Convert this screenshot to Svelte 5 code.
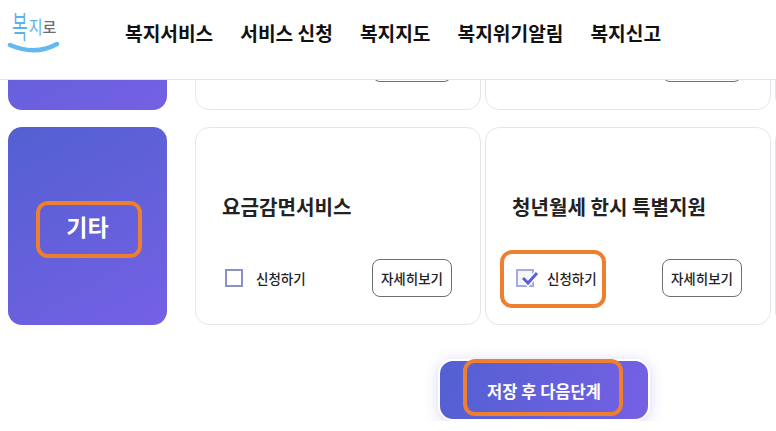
<script>
  const nav = ['복지서비스', '서비스 신청', '복지지도', '복지위기알림', '복지신고']

  const rows = [
    {
      label: '',
      cards: [
        { title: '', checked: false, marked: false },
        { title: '', checked: false, marked: false }
      ]
    },
    {
      label: '기타',
      cards: [
        { title: '요금감면서비스', checked: false, marked: false },
        { title: '청년월세 한시 특별지원', checked: true, marked: true }
      ]
    }
  ]
</script>

<div class="page">
  <header class="top">
    <a class="logo" href="#top">
      <span class="logo-text">
        <span class="logo-bok">복</span><span class="logo-ji">지</span><span class="logo-ro">로</span>
      </span>
      <svg class="smile" width="56" height="16" viewBox="0 0 56 16" aria-hidden="true">
        <path d="M3 4 Q28 15 50 3" fill="none" stroke="#63b9ef" stroke-width="4.5" stroke-linecap="round" />
      </svg>
    </a>
    <nav class="menu">
      {#each nav as item}
        <a href="#top">{item}</a>
      {/each}
    </nav>
  </header>

  <main class="scroller">
    <div class="list">
      {#each rows as row}
        <section class="row">
          <div class="category">
            {#if row.label}
              <span class="category-label">{row.label}</span>
              <span class="mark mark-category"></span>
            {/if}
          </div>
          {#each row.cards as card}
            <article class="card">
              <h3>{card.title}</h3>
              <div class="actions">
                <label class="check">
                  <span class="box" class:checked={card.checked}>
                    {#if card.checked}
                      <svg width="24" height="18" viewBox="0 0 24 18" aria-hidden="true">
                        <path d="M7 9 L12 14 L21 4" fill="none" stroke="#fff" stroke-width="6" />
                        <path d="M7 9 L12 14 L21 4" fill="none" stroke="#5b5fd8" stroke-width="3" />
                      </svg>
                    {/if}
                  </span>
                  신청하기
                  {#if card.marked}<span class="mark mark-check"></span>{/if}
                </label>
                <button class="more" type="button">자세히보기</button>
              </div>
            </article>
          {/each}
          <div class="card-edge"></div>
        </section>
      {/each}
    </div>
    <div class="footer">
      <button class="save" type="button">
        저장 후 다음단계
        <span class="mark mark-save"></span>
      </button>
    </div>
  </main>
</div>

<style>
  :global(body) {
    margin: 0;
    background: #fff;
  }
  .page {
    width: 776px;
    height: 431px;
    overflow: hidden;
    font-family: "Noto Sans CJK KR", "Noto Sans", sans-serif;
    color: #1f1f1f;
  }
  .top {
    position: relative;
    z-index: 2;
    display: flex;
    align-items: center;
    height: 79px;
    background: #fff;
    border-bottom: 1px solid #e4e4e6;
  }
  .logo {
    position: relative;
    display: block;
    width: 125px;
    height: 79px;
    flex-shrink: 0;
    text-decoration: none;
  }
  .logo-text {
    position: absolute;
    left: 12px;
    top: 12px;
    display: flex;
    align-items: flex-end;
    height: 28px;
    font-weight: 400;
    color: #5ab2ec;
    white-space: nowrap;
  }
  .logo-bok {
    font-size: 17px;
    line-height: 16px;
    transform-origin: 50% 100%;
    transform: scaleY(1.8);
  }
  .logo-ji {
    font-size: 15px;
    line-height: 16px;
    margin-left: 1px;
    margin-bottom: 5px;
    transform: scaleY(1.2);
  }
  .logo-ro {
    font-size: 15px;
    line-height: 16px;
    margin-bottom: 5px;
    font-weight: 500;
    color: #6d6d75;
  }
  .smile {
    position: absolute;
    left: 7px;
    top: 41px;
  }
  .menu {
    display: flex;
    gap: 27px;
    margin-top: -13px;
  }
  .menu a {
    font-size: 19.2px;
    line-height: 28px;
    font-weight: 700;
    color: #111;
    text-decoration: none;
    white-space: nowrap;
  }
  .scroller {
    height: 509px;
    margin-top: -168px;
    overflow: hidden;
  }
  .list {
    display: flex;
    flex-direction: column;
    gap: 17px;
  }
  .row {
    display: flex;
    height: 198px;
    padding-left: 8px;
  }
  .category {
    position: relative;
    display: flex;
    align-items: center;
    justify-content: center;
    flex: 0 0 159px;
    margin-right: 28px;
    border-radius: 14px;
    background: linear-gradient(150deg, #5360d2, #7560e4);
    color: #fff;
  }
  .category-label {
    font-size: 23px;
    font-weight: 700;
  }
  .card {
    flex: 0 0 286px;
    margin-right: 4px;
    box-sizing: border-box;
    padding: 0 28px 0 27px;
    display: flex;
    flex-direction: column;
    border: 1px solid #e6e6e8;
    border-radius: 14px;
    background: #fff;
  }
  .card-edge {
    flex: 0 0 20px;
    box-sizing: border-box;
    border: 1px solid #e6e6e8;
    border-right: 0;
    border-radius: 14px 0 0 14px;
  }
  .card h3 {
    margin: 60px 0 0 -1px;
    height: 38px;
    font-size: 20.1px;
    line-height: 38px;
    font-weight: 700;
    color: #222;
    white-space: nowrap;
  }
  .actions {
    display: flex;
    align-items: center;
    justify-content: space-between;
    margin-top: 33px;
  }
  .check {
    position: relative;
    display: flex;
    align-items: center;
    gap: 13px;
    margin-left: 2px;
    margin-top: -1px;
    font-size: 13.5px;
    font-weight: 500;
    color: #222;
  }
  .box {
    position: relative;
    width: 18px;
    height: 18px;
    box-sizing: border-box;
    border: 2px solid #8a91c6;
  }
  .box.checked {
    margin-left: 1px;
    border-color: #a6abdc;
    background: #f6f6fd;
  }
  .box svg {
    position: absolute;
    left: -2px;
    top: -2px;
  }
  .more {
    width: 80px;
    height: 38px;
    padding: 0;
    box-sizing: border-box;
    border: 1px solid #6f6f6f;
    border-radius: 8px;
    background: #fff;
    font: 500 13.5px "Noto Sans CJK KR", sans-serif;
    color: #222;
  }
  .footer {
    display: flex;
    height: 62px;
    margin-top: 34px;
    padding-left: 438px;
  }
  .save {
    position: relative;
    width: 212px;
    height: 62px;
    padding: 1px 0 0;
    border: 2px solid #fff;
    border-radius: 15px;
    background: linear-gradient(100deg, #5360d2, #7560e4);
    box-shadow: 0 2px 14px rgba(120, 100, 220, 0.28);
    font: 700 16.5px "Noto Sans CJK KR", sans-serif;
    color: #fff;
    box-sizing: border-box;
  }
  .mark {
    position: absolute;
    box-sizing: border-box;
    border: 4px solid #ee7f2e;
    border-radius: 12px;
    pointer-events: none;
  }
  .mark-category {
    left: 28px;
    top: 74px;
    width: 106px;
    height: 57px;
  }
  .mark-check {
    left: -15px;
    top: -18px;
    width: 106px;
    height: 58px;
  }
  .mark-save {
    left: 23px;
    top: -2px;
    width: 160px;
    height: 57px;
  }
</style>
